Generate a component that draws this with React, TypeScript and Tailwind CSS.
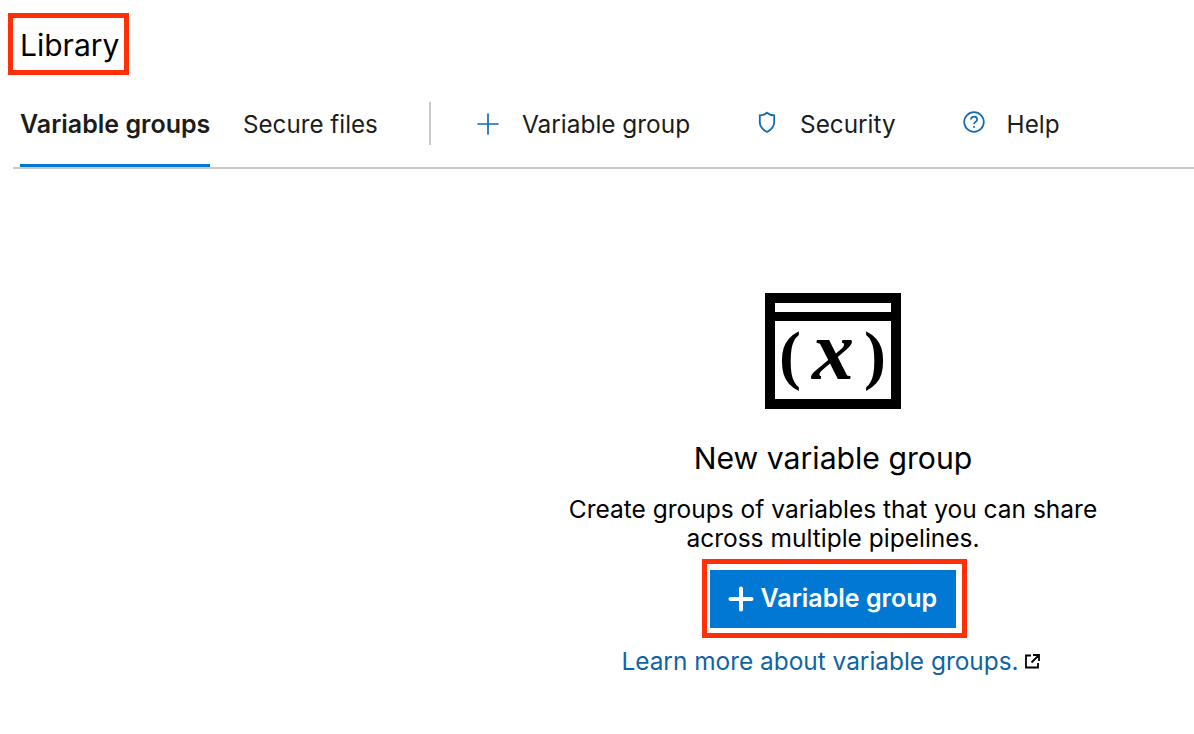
import { Plus } from "lucide-react";

const F = { fontFamily: "Inter, 'Liberation Sans', sans-serif" };

function Shield() {
  return (
    <svg width="20" height="23" viewBox="0 0 20 22" fill="none" stroke="#0f6cb5" strokeWidth="1.8" className="-mt-1">
      <path d="M10 1.200c2 1.700 4.500 2.600 7.200 2.700v6.600c0 4.400-2.700 7.600-7.200 10-4.500-2.400-7.200-5.600-7.200-10V3.900C5.500 3.800 8 2.900 10 1.200z" />
    </svg>
  );
}

function Help() {
  return (
    <svg width="22" height="22" viewBox="0 0 22 22" fill="none" stroke="#0f6cb5" className="-mt-1">
      <circle cx="11" cy="11" r="9.800" strokeWidth="1.700" />
      <path d="M7.900 8.600c0-1.800 1.400-3 3.100-3s3.100 1.100 3.100 2.800c0 2.500-3.100 2.500-3.100 4.900" strokeWidth="1.700" />
      <circle cx="11" cy="16" r="1" fill="#0f6cb5" stroke="none" />
    </svg>
  );
}

function VariableArt() {
  return (
    <svg width="136" height="116" viewBox="0 0 136 116">
      <rect x="5" y="5" width="126" height="106" fill="#fff" stroke="#000" strokeWidth="10" />
      <rect x="5" y="19" width="126" height="9" fill="#000" />
      <text x="25" y="84" textAnchor="middle" fontSize="66" fontWeight="700" fontFamily="'Liberation Serif', serif">(</text>
      <text x="68" y="86" textAnchor="middle" fontSize="84" fontWeight="700" fontStyle="italic" fontFamily="'Liberation Serif', serif">x</text>
      <text x="110" y="84" textAnchor="middle" fontSize="66" fontWeight="700" fontFamily="'Liberation Serif', serif">)</text>
    </svg>
  );
}

export default function App() {
  return (
    <div className="w-[1194px] h-[734px] bg-white overflow-hidden text-[#1c1c1c]" style={F}>
      <div className="pt-[13px] pl-2">
        <div className="w-[121px] h-[62px] border-[5px] border-[#ff3008] flex items-center pl-[7px] pt-[3px] text-[30px] text-black">
          Library
        </div>
      </div>
      <div className="ml-[13px] mt-[27px] h-[67px] border-b-2 border-[#c8c8c8] flex items-start pl-[7px]">
        <div className="h-[65px] w-[190px] border-b-[3px] border-[#0078d4] text-[25px] font-semibold pt-[6px] whitespace-nowrap leading-[32px]">
          Variable groups
        </div>
        <div className="ml-[33px] w-[137px] text-[24.2px] pt-[7px] leading-[32px] whitespace-nowrap">Secure files</div>
        <div className="ml-[49px] w-[2px] h-[43px] bg-[#c8c8c8]" />
        <div className="ml-[40px] flex items-center gap-[17px] h-[44px] text-[24.4px]">
          <Plus size={34} color="#0f6cb5" strokeWidth={1.2} />
          <span className="whitespace-nowrap">Variable group</span>
        </div>
        <div className="ml-[67px] flex items-center gap-[23px] h-[44px] text-[24.3px]">
          <Shield />
          <span className="whitespace-nowrap">Security</span>
        </div>
        <div className="ml-[67px] flex items-center gap-[22px] h-[44px] text-[24.3px]">
          <Help />
          <span className="whitespace-nowrap">Help</span>
        </div>
      </div>
      <div className="ml-[472px] flex flex-col items-center pt-[124px]">
        <VariableArt />
        <div className="mt-[29px] text-[30.200px] leading-[40px] text-black">New variable group</div>
        <div className="mt-[17px] text-[24.500px] leading-[29px] text-center text-black w-[560px]">
          Create groups of variables that you can share
          <br />
          across multiple pipelines.
        </div>
        <div className="mt-[6px] ml-[2px] w-[265px] h-[79px] border-[5px] border-[#ff3008] pl-[3px] pr-[6px] pt-[6px] pb-[5px]">
          <button className="w-full h-full bg-[#0078d4] text-white text-[25px] font-semibold flex items-center justify-start pl-[13px] gap-[2px] whitespace-nowrap">
            <Plus size={36} strokeWidth={2.7} />
            Variable group
          </button>
        </div>
        <div className="mt-[7px] pr-[5px] flex items-center text-[24.400px] leading-[32px] text-[#0f64a3] whitespace-nowrap">
          Learn more about variable groups.
          <svg className="ml-[6px]" width="15" height="15" viewBox="0 0 15 15" fill="none" stroke="#000" strokeWidth="1.800">
            <path d="M6 1.500H1v12h12V9M8 1h6v6M14 1L6.500 8.500" />
          </svg>
        </div>
      </div>
    </div>
  );
}
